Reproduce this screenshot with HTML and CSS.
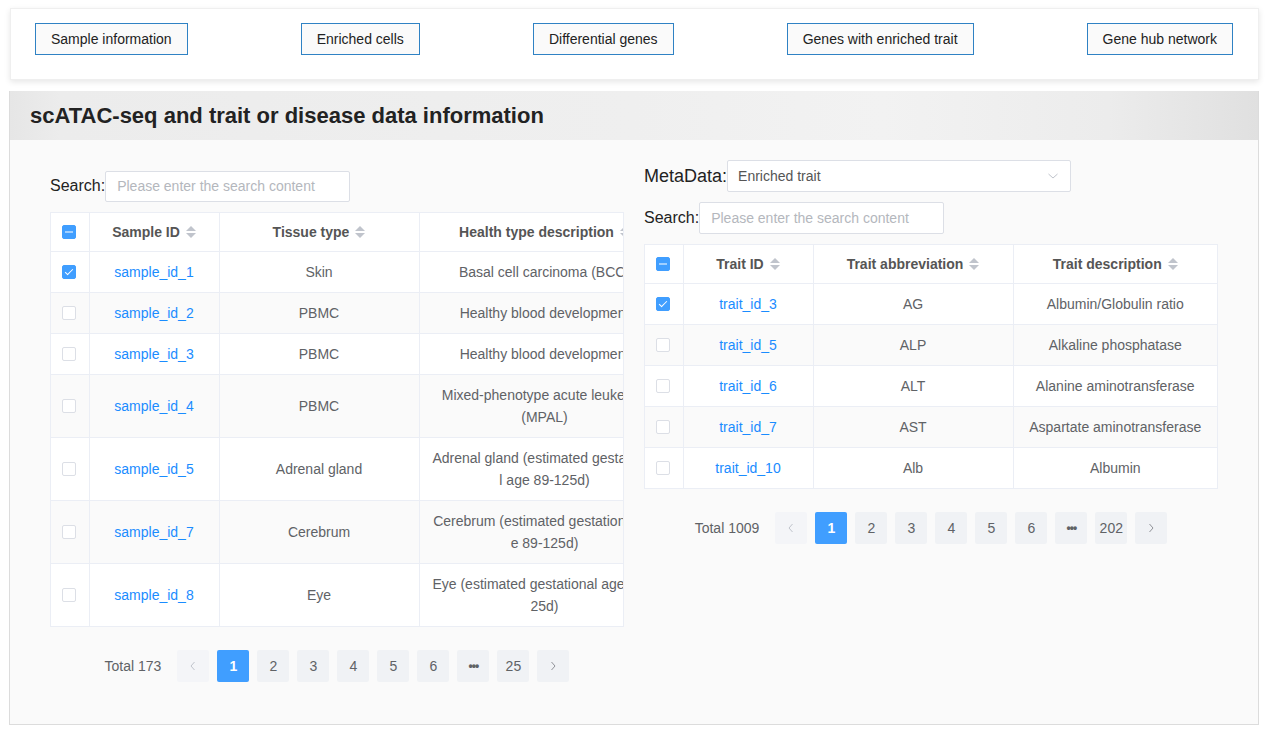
FILE: index.html
```html
<!DOCTYPE html>
<html lang="en">
<head>
<meta charset="utf-8">
<title>scATAC-seq</title>
<link rel="stylesheet" href="styles.css">
</head>
<body>
<nav class="nav-card">
  <button class="nav-btn">Sample information</button>
  <button class="nav-btn">Enriched cells</button>
  <button class="nav-btn">Differential genes</button>
  <button class="nav-btn">Genes with enriched trait</button>
  <button class="nav-btn">Gene hub network</button>
</nav>

<section class="panel">
  <header class="panel-head"><h1>scATAC-seq and trait or disease data information</h1></header>
  <div class="panel-body">
    <div class="col col-left">
      <div class="field">
        <label class="lbl">Search:</label>
        <div class="input">Please enter the search content</div>
      </div>
      <div class="table-wrap">
        <table class="tbl">
          <colgroup><col class="c-chk"><col class="c-id"><col class="c-mid"><col class="c-wide"></colgroup>
          <thead>
            <tr>
              <th><span class="cb cb-ind"></span></th>
              <th>Sample ID<span class="caret"></span></th>
              <th>Tissue type<span class="caret"></span></th>
              <th>Health type description<span class="caret"></span></th>
            </tr>
          </thead>
          <tbody>
            <tr><td><span class="cb cb-on"></span></td><td><a>sample_id_1</a></td><td>Skin</td><td>Basal cell carcinoma (BCC)</td></tr>
            <tr class="alt"><td><span class="cb"></span></td><td><a>sample_id_2</a></td><td>PBMC</td><td>Healthy blood development</td></tr>
            <tr><td><span class="cb"></span></td><td><a>sample_id_3</a></td><td>PBMC</td><td>Healthy blood development</td></tr>
            <tr class="alt"><td><span class="cb"></span></td><td><a>sample_id_4</a></td><td>PBMC</td><td>Mixed-phenotype acute leukemia <span class="nw">(MPAL)</span></td></tr>
            <tr><td><span class="cb"></span></td><td><a>sample_id_5</a></td><td>Adrenal gland</td><td>Adrenal gland (estimated gestational age 89-125d)</td></tr>
            <tr class="alt"><td><span class="cb"></span></td><td><a>sample_id_7</a></td><td>Cerebrum</td><td>Cerebrum (estimated gestational age 89-125d)</td></tr>
            <tr><td><span class="cb"></span></td><td><a>sample_id_8</a></td><td>Eye</td><td>Eye (estimated gestational age 89-125d)</td></tr>
          </tbody>
        </table>
      </div>
      <div class="pager">
        <span class="total">Total 173</span>
        <span class="pg pg-nav pg-dis"><svg width="8" height="10" viewBox="0 0 8 10"><path d="M5.5 1 L2 5 L5.5 9" fill="none" stroke="currentColor" stroke-width="1"/></svg></span>
        <span class="pg pg-on">1</span>
        <span class="pg">2</span>
        <span class="pg">3</span>
        <span class="pg">4</span>
        <span class="pg">5</span>
        <span class="pg">6</span>
        <span class="pg pg-more">•••</span>
        <span class="pg">25</span>
        <span class="pg pg-nav"><svg width="8" height="10" viewBox="0 0 8 10"><path d="M2.5 1 L6 5 L2.5 9" fill="none" stroke="currentColor" stroke-width="1"/></svg></span>
      </div>
    </div>

    <div class="col col-right">
      <div class="field">
        <label class="lbl lbl-big">MetaData:</label>
        <div class="select">
          <span>Enriched trait</span>
          <svg width="12" height="8" viewBox="0 0 12 8"><path d="M1.5 2 L6 6 L10.5 2" fill="none" stroke="#c0c4cc" stroke-width="1"/></svg>
        </div>
      </div>
      <div class="field field-gap">
        <label class="lbl">Search:</label>
        <div class="input">Please enter the search content</div>
      </div>
      <div class="table-wrap">
        <table class="tbl">
          <colgroup><col class="c-chk"><col class="c-id"><col class="c-mid"><col class="c-rest"></colgroup>
          <thead>
            <tr>
              <th><span class="cb cb-ind"></span></th>
              <th>Trait ID<span class="caret"></span></th>
              <th>Trait abbreviation<span class="caret"></span></th>
              <th>Trait description<span class="caret"></span></th>
            </tr>
          </thead>
          <tbody>
            <tr><td><span class="cb cb-on"></span></td><td><a>trait_id_3</a></td><td>AG</td><td>Albumin/Globulin ratio</td></tr>
            <tr class="alt"><td><span class="cb"></span></td><td><a>trait_id_5</a></td><td>ALP</td><td>Alkaline phosphatase</td></tr>
            <tr><td><span class="cb"></span></td><td><a>trait_id_6</a></td><td>ALT</td><td>Alanine aminotransferase</td></tr>
            <tr class="alt"><td><span class="cb"></span></td><td><a>trait_id_7</a></td><td>AST</td><td>Aspartate aminotransferase</td></tr>
            <tr><td><span class="cb"></span></td><td><a>trait_id_10</a></td><td>Alb</td><td>Albumin</td></tr>
          </tbody>
        </table>
      </div>
      <div class="pager">
        <span class="total">Total 1009</span>
        <span class="pg pg-nav pg-dis"><svg width="8" height="10" viewBox="0 0 8 10"><path d="M5.5 1 L2 5 L5.5 9" fill="none" stroke="currentColor" stroke-width="1"/></svg></span>
        <span class="pg pg-on">1</span>
        <span class="pg">2</span>
        <span class="pg">3</span>
        <span class="pg">4</span>
        <span class="pg">5</span>
        <span class="pg">6</span>
        <span class="pg pg-more">•••</span>
        <span class="pg">202</span>
        <span class="pg pg-nav"><svg width="8" height="10" viewBox="0 0 8 10"><path d="M2.5 1 L6 5 L2.5 9" fill="none" stroke="currentColor" stroke-width="1"/></svg></span>
      </div>
    </div>
  </div>
</section>
</body>
</html>
```

FILE: styles.css
```css
* { box-sizing: border-box; }
html, body { margin: 0; padding: 0; background: #fff; }
body {
  font-family: "Liberation Sans", Arial, sans-serif;
  font-size: 14px;
  color: #606266;
  padding: 8px 13px 0 9px;
}

.nav-card {
  margin-left: 1px;
  height: 72px;
  background: #fff;
  border: 1px solid #efefef;
  box-shadow: 0 2px 6px rgba(0,0,0,0.10);
  display: flex;
  align-items: flex-start;
  justify-content: space-between;
  padding: 14px 25px 0 24px;
}
.nav-btn {
  font-family: "Liberation Sans", Arial, sans-serif;
  font-size: 14px;
  color: #222;
  background: #fafafa;
  border: 1px solid #2f82c4;
  height: 32px;
  padding: 0 15px;
  cursor: pointer;
}

.panel {
  margin-top: 11px;
  border: 1px solid #dcdcdc;
  border-top: none;
  background: #fafafa;
}
.panel-head {
  height: 49px;
  background: linear-gradient(to right, #e6e6e6 0%, #ececec 4%, #efefef 50%, #f2f2f2 70%, #ececec 88%, #e0e0e0 100%);
  display: flex;
  align-items: center;
  padding-left: 20px;
}
.panel-head h1 {
  margin: 0;
  font-size: 22px;
  font-weight: bold;
  color: #222;
}
.panel-body {
  display: flex;
  gap: 20px;
  padding: 20px 40px 42px 40px;
  align-items: flex-start;
}
.col { width: 574px; flex: none; }
.col-left { padding-top: 10px; }

.field { display: flex; align-items: center; height: 32px; }
.field-gap { margin-top: 10px; }
.lbl { font-size: 16px; color: #222; }
.lbl-big { font-size: 18px; }
.input {
  width: 245px;
  height: 32px;
  background: #fff;
  border: 1px solid #dcdfe6;
  border-radius: 2px;
  color: #b4b7bd;
  padding-left: 11px;
  line-height: 30px;
  font-size: 14px;
}
.col-left .input { height: 31px; line-height: 29px; }
.select {
  width: 344px;
  height: 32px;
  background: #fff;
  border: 1px solid #dcdfe6;
  border-radius: 2px;
  display: flex;
  align-items: center;
  justify-content: space-between;
  padding: 0 11px 0 10px;
  color: #555;
  font-size: 14px;
}

.table-wrap {
  margin-top: 10px;
  width: 574px;
  overflow: hidden;
  border-left: 1px solid #ebeef5;
  border-right: 1px solid #ebeef5;
  background: #fff;
}
.tbl {
  border-collapse: collapse;
  table-layout: fixed;
  width: 100%;
}
.col-left .tbl { width: 615px; }
.c-chk { width: 38px; }
.c-id { width: 130px; }
.c-mid { width: 200px; }
.c-wide { width: 247px; }
.tbl th, .tbl td {
  border: 1px solid #ebeef5;
  text-align: center;
  vertical-align: middle;
  line-height: 22px;
  padding: 9px 10px;
  word-break: break-all;
}
.tbl tr > :first-child { border-left: none; padding: 0; }
.tbl th { padding: 8px 10px; color: #555; font-weight: bold; background: #fff; }
.tbl th:last-child, .tbl td:last-child { padding-left: 12px; padding-right: 8px; }
.col-right .tbl th:last-child, .col-right .tbl td:last-child { padding: 9px 10px; border-right: none; }
.col-right .tbl th:last-child { padding: 8px 10px; }
.tbl td { color: #606266; }
.tbl tr.alt td { background: #fafafa; }
.tbl a { color: #1a8cff; }
.nw { white-space: nowrap; word-break: keep-all; }

.caret {
  display: inline-block;
  width: 10px;
  height: 14px;
  margin-left: 6px;
  vertical-align: -2px;
  position: relative;
}
.caret::before, .caret::after {
  content: "";
  position: absolute;
  left: 0;
  border-left: 5px solid transparent;
  border-right: 5px solid transparent;
}
.caret::before { top: 1px; border-bottom: 5px solid #c0c4cc; }
.caret::after { bottom: 1px; border-top: 5px solid #c0c4cc; }

.cb {
  display: inline-block;
  width: 14px;
  height: 14px;
  border: 1px solid #dcdfe6;
  border-radius: 2px;
  background: #fff;
  vertical-align: middle;
  position: relative;
  margin-left: -2px;
  margin-top: -3px;
}
.cb-on, .cb-ind { background: #409eff; border-color: #409eff; }
.cb-on::after {
  content: "";
  position: absolute;
  left: 4px;
  top: 1px;
  width: 3px;
  height: 7px;
  border: 1px solid #fff;
  border-left: 0;
  border-top: 0;
  transform: rotate(45deg);
}
.cb-ind::after {
  content: "";
  position: absolute;
  left: 2px;
  right: 2px;
  top: 5px;
  height: 2px;
  background: #fff;
  transform: scaleY(0.5);
}

.pager {
  display: flex;
  justify-content: center;
  align-items: center;
  margin-top: 23px;
  height: 32px;
}
.total { margin-right: 16px; color: #606266; }
.pg {
  width: 32px;
  height: 32px;
  margin: 0 4px;
  border-radius: 2px;
  background: #f0f2f5;
  color: #606266;
  display: flex;
  align-items: center;
  justify-content: center;
  font-size: 14px;
}
.pg:nth-child(2) { margin-left: 0; }
.pg:last-child { margin-right: 0; }
.pg-on { background: #409eff; color: #fff; font-weight: bold; }
.pg-nav { color: #909399; }
.pg-dis { background: #f4f5f8; color: #c0c4cc; }
.pg-more { font-size: 12px; letter-spacing: -1px; color: #606266; font-weight: bold; }
```
